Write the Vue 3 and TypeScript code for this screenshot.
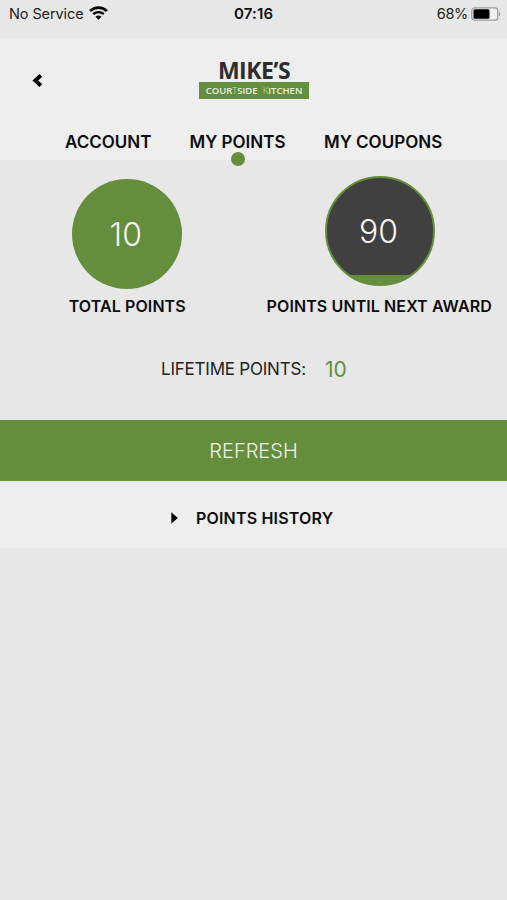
<script setup lang="ts">
interface Tab {
  id: string
  label: string
}

const tabs: Tab[] = [
  { id: 'account', label: 'ACCOUNT' },
  { id: 'points', label: 'MY POINTS' },
  { id: 'coupons', label: 'MY COUPONS' },
]
const activeTab = 'points'
const totalPoints = 10
const remainingPoints = 90
const lifetimePoints = 10
</script>

<template>
  <div class="screen">
    <div class="status">
      <span class="carrier">No Service</span>
      <svg class="wifi" width="19" height="14" viewBox="0 0 19 14">
        <path d="M1.100 5C5.800.4 13.200.4 17.900 5" fill="none" stroke="#000" stroke-width="2.700" />
        <path d="M4.200 8.200C7.200 5.400 11.800 5.400 14.800 8.200" fill="none" stroke="#000" stroke-width="2.400" />
        <path d="M9.500 13.800L6.500 10.800Q9.500 8.200 12.500 10.800Z" fill="#000" />
      </svg>
      <span class="time">07:16</span>
      <span class="percent">68%</span>
      <svg class="battery" width="30" height="14" viewBox="0 0 30 14">
        <rect x="0.8" y="0.800" width="26" height="12.400" rx="3" fill="#f0f0f0" stroke="#9c9c9c" stroke-width="1.300" />
        <rect x="2.500" y="2.300" width="16" height="9.400" rx="1.500" fill="#000" />
        <path d="M28 4.500Q30.500 7 28 9.500Z" fill="#9c9c9c" />
      </svg>
    </div>

    <header class="header">
      <div class="brand-row">
        <svg class="back" width="12" height="15" viewBox="0 0 12 15">
          <path d="M8.800 2.400L3.400 7.500L8.800 12.600" fill="none" stroke="#000" stroke-width="4" />
        </svg>
        <div class="logo">
          <div class="logo-name">MIKE’S</div>
          <div class="logo-sub">
            <span>COUR<i>T</i>SIDE</span>
            <span><i>K</i>ITCHEN</span>
          </div>
        </div>
      </div>
      <nav class="tabs">
        <a v-for="tab in tabs" :key="tab.id" :class="['tab', tab.id, { active: tab.id === activeTab }]">
          <span>{{ tab.label }}</span>
        </a>
      </nav>
    </header>

    <main>
      <section class="meters">
        <div class="meter total">
          <div class="circle"><span>{{ totalPoints }}</span></div>
          <div class="caption">TOTAL POINTS</div>
        </div>
        <div class="meter next">
          <div class="circle ring"><span>{{ remainingPoints }}</span></div>
          <div class="caption">POINTS UNTIL NEXT AWARD</div>
        </div>
      </section>
      <div class="lifetime">
        <span class="life-label">LIFETIME POINTS:</span>
        <span class="life-value">{{ lifetimePoints }}</span>
      </div>
      <button class="refresh"><span>REFRESH</span></button>
      <div class="history">
        <svg width="7" height="12" viewBox="0 0 7 12"><path d="M.3.200L6.800 6L.3 11.800Z" fill="#000" /></svg>
        <span>POINTS HISTORY</span>
      </div>
    </main>
  </div>
</template>

<style>
body {
  background: #e7e7e7;
}
</style>

<style scoped>
.screen {
  width: 507px;
  height: 900px;
  overflow: hidden;
  background: #e7e7e7;
  color: #0c0c0c;
  font-family: Inter, "Liberation Sans", sans-serif;
  white-space: nowrap;
}
.status {
  display: flex;
  align-items: center;
  box-sizing: border-box;
  height: 38px;
  padding: 0 6px 11px 9px;
  font-size: 15px;
}
.carrier {
  width: 75px;
  font-size: 14.5px;
  letter-spacing: -0.1px;
  color: #222;
}
.wifi {
  margin-left: 5px;
  margin-top: -2px;
}
.time {
  width: 42px;
  margin-left: 126px;
  font-weight: 600;
  letter-spacing: 0.15px;
}
.percent {
  margin-left: auto;
  font-size: 14.5px;
  letter-spacing: -0.3px;
  color: #222;
}
.battery {
  margin-left: 3px;
}
.header {
  height: 122px;
  background: #eee;
}
.brand-row {
  display: flex;
  height: 86px;
}
.back {
  margin: 35px 0 0 32px;
}
.logo {
  width: 110px;
  margin: 19px 0 0 155px;
  font-family: "Open Sans", sans-serif;
  text-align: center;
}
.logo-name {
  height: 25px;
  line-height: 26px;
  font-size: 23px;
  font-weight: 700;
  letter-spacing: -0.5px;
  color: #2d2d2d;
}
.logo-sub {
  display: flex;
  justify-content: center;
  gap: 5px;
  height: 17px;
  line-height: 17px;
  background: #648d3c;
  color: #e9f0e2;
  font-size: 9.5px;
  font-weight: 600;
}
.logo-sub i {
  font-style: normal;
  font-weight: 300;
  opacity: 0.8;
}
.tabs {
  display: flex;
  height: 36px;
  padding-left: 65px;
  font-size: 17px;
  font-weight: 600;
  line-height: 36px;
}
.tab {
  position: relative;
}
.account {
  width: 124.5px;
}
.points {
  width: 134.5px;
}
.active::after {
  content: "";
  position: absolute;
  left: 41.5px;
  top: 27.500px;
  width: 14px;
  height: 14px;
  border-radius: 50%;
  background: #648d3c;
}
.meters {
  display: grid;
  grid-template-columns: 254px 253px;
  height: 160px;
}
.meter {
  display: flex;
  flex-direction: column;
  align-items: center;
  padding-top: 19px;
}
.total {
  padding-left: 0.5px;
}
.next {
  padding-top: 16px;
  padding-right: 1px;
}
.circle {
  display: grid;
  place-items: center;
  box-sizing: border-box;
  width: 110px;
  height: 110px;
  border-radius: 50%;
  background: #648d3c;
  color: #f5f5f5;
  font-size: 32px;
  font-weight: 300;
}
.ring {
  border: 2.5px solid #648d3c;
  background: #648d3c linear-gradient(#404040 97px, #648d3c 97px);
}
.circle span {
  margin-left: -3px;
}
.caption {
  margin-top: 6px;
  font-size: 16px;
  font-weight: 600;
  line-height: 22px;
  letter-spacing: 0.1px;
}
.next .caption {
  margin: 9px 0 0 -1.5px;
}
.lifetime {
  display: flex;
  align-items: center;
  height: 100px;
  padding-left: 161px;
  box-sizing: border-box;
  padding-bottom: 2px;
}
.life-label {
  width: 164px;
  font-size: 17px;
  letter-spacing: -0.22px;
  color: #222;
}
.life-value {
  font-size: 21px;
  color: #648d3c;
}
.refresh {
  display: block;
  width: 507px;
  height: 61px;
  padding: 0;
  border: 0;
  background: #648d3c;
  color: #f0f4ec;
  font-family: inherit;
  font-size: 20px;
  font-weight: 350;
}
.history {
  display: flex;
  align-items: center;
  box-sizing: border-box;
  height: 67px;
  padding: 7px 0 0 171px;
  background: linear-gradient(#e9e9e9, #eee 9px);
  font-size: 16px;
  font-weight: 600;
  letter-spacing: 0.18px;
}
.history span {
  margin-left: 18px;
}
</style>
